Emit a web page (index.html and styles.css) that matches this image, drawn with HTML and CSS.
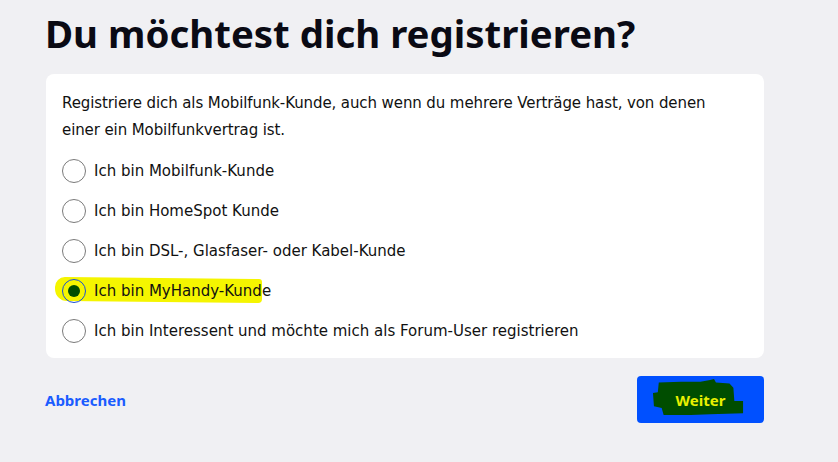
FILE: index.html
```html
<!DOCTYPE html>
<html lang="de">
<head>
<meta charset="utf-8">
<link rel="stylesheet" href="styles.css">
</head>
<body>
<main class="page">
  <h1 class="title">Du möchtest dich registrieren?</h1>
  <section class="card">
    <p class="intro">Registriere dich als Mobilfunk-Kunde, auch wenn du mehrere Verträge hast, von denen einer ein Mobilfunkvertrag ist.</p>
    <ul class="options">
      <li class="option"><span class="radio"></span><span class="label">Ich bin Mobilfunk-Kunde</span></li>
      <li class="option"><span class="radio"></span><span class="label">Ich bin HomeSpot Kunde</span></li>
      <li class="option"><span class="radio"></span><span class="label">Ich bin DSL-, Glasfaser- oder Kabel-Kunde</span></li>
      <li class="option option-marked">
        <span class="highlight"></span>
        <span class="radio radio-checked"><span class="dot"></span></span><span class="label">Ich bin MyHandy-Kunde</span>
      </li>
      <li class="option"><span class="radio"></span><span class="label">Ich bin Interessent und möchte mich als Forum-User registrieren</span></li>
    </ul>
  </section>
  <div class="actions">
    <a class="cancel" href="#">Abbrechen</a>
    <button class="next" type="button">
      <svg class="scribble" viewBox="0 0 96 42" preserveAspectRatio="none" aria-hidden="true">
        <path d="M7 4 L30 3 L50 3 L60 1 L64 0 L66 4 L80 5 L84 10 L85 25 L94 25 L94 39 L60 40 L40 41 L12 41 L10 33 L2 31 L1 16 L6 15 Z" fill="#004d00"/>
      </svg>
      <span class="next-text">Weiter</span>
    </button>
  </div>
</main>
</body>
</html>
```

FILE: styles.css
```css
html, body {
  margin: 0;
  padding: 0;
}
body {
  background: #f0f0f3;
  font-family: "DejaVu Sans", "Noto Sans", sans-serif;
  color: #0d0d14;
  width: 838px;
  height: 462px;
  overflow: hidden;
}
.page {
  padding: 0 74px 0 45px;
}
.title {
  margin: 0;
  padding-top: 10px;
  font-family: "Noto Sans", "DejaVu Sans", sans-serif;
  font-size: 38.4px;
  line-height: 46px;
  font-weight: 700;
  color: #0a0a14;
}
.card {
  margin-top: 18px;
  margin-left: 1px;
  background: #ffffff;
  border-radius: 8px;
  padding: 16px 16px 7px 16px;
  width: 686px;
}
.intro {
  margin: 0;
  max-width: 650px;
  font-size: 15px;
  line-height: 27px;
  letter-spacing: -0.1px;
  color: #111;
}
.options {
  list-style: none;
  margin: 7px 0 0 0;
  padding: 0;
}
.option {
  position: relative;
  display: flex;
  align-items: center;
  height: 40px;
  font-size: 15px;
  color: #111;
}
.radio {
  position: relative;
  box-sizing: border-box;
  width: 24px;
  height: 24px;
  border: 1px solid #7a7a7a;
  border-radius: 50%;
  margin-right: 8px;
  display: flex;
  align-items: center;
  justify-content: center;
  background: #fff;
}
.radio-checked {
  border-color: #1a4fd6;
  background: transparent;
}
.dot {
  width: 12px;
  height: 12px;
  border-radius: 50%;
  background: #004d00;
}
.label {
  position: relative;
}
.highlight {
  position: absolute;
  left: -7px;
  top: 7px;
  width: 207px;
  height: 24px;
  background: #f5f500;
  border-radius: 10px 3px 4px 12px;
  transform: skewY(0.6deg);
}
.actions {
  display: flex;
  justify-content: space-between;
  align-items: center;
  margin-top: 18px;
}
.cancel {
  font-family: "Noto Sans", "DejaVu Sans", sans-serif;
  font-size: 15px;
  font-weight: 700;
  color: #1a5cff;
  text-decoration: none;
}
.next {
  position: relative;
  width: 127px;
  height: 47px;
  border: none;
  border-radius: 4px;
  background: #0050ff;
  padding: 0;
  cursor: pointer;
}
.scribble {
  position: absolute;
  left: 15px;
  top: 3px;
  width: 93px;
  height: 37px;
}
.next-text {
  position: relative;
  font-family: "Noto Sans", "DejaVu Sans", sans-serif;
  font-size: 15px;
  font-weight: 700;
  color: #e8f000;
}
```
